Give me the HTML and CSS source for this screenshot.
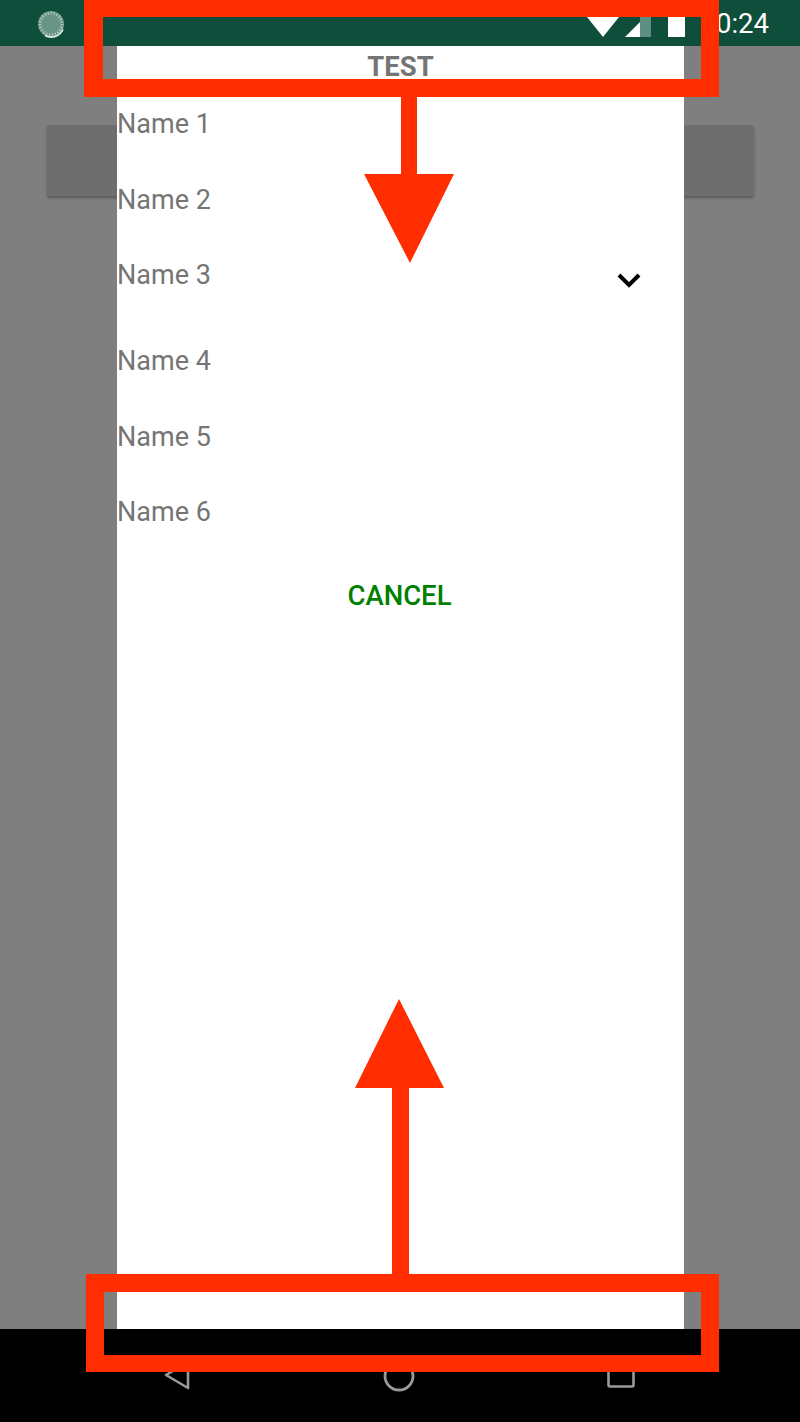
FILE: index.html
```html
<!DOCTYPE html>
<html lang="en">
<head>
  <meta charset="UTF-8">
  <meta name="viewport" content="width=device-width, initial-scale=1.0">
  <title>Dialog height</title>
  <link rel="stylesheet" href="styles.css">
</head>
<body>
  <div class="status-bar">
    <svg class="loader" width="28" height="28" viewBox="0 0 28 28">
      <circle cx="14" cy="14" r="13" fill="#6a9486"/>
      <circle cx="14" cy="14" r="11" fill="none" stroke="#a9c4ba" stroke-width="3" stroke-dasharray="1.4 1.6"/>
      <path d="M8 25.5a13 13 0 0 0 18-6" fill="none" stroke="#e8f0ed" stroke-width="1.6"/>
    </svg>
    <div class="status-icons">
      <svg width="32" height="20" viewBox="0 0 32 20"><path d="M0 0h32L16 20z" fill="#fff"/></svg>
      <svg width="26" height="20" viewBox="0 0 26 20">
        <path d="M0 20L15 5v15z" fill="#fff"/>
        <path d="M15 0h11v20H15z" fill="#5f8f80"/>
      </svg>
      <div class="battery"></div>
      <span class="clock">10:24</span>
    </div>
  </div>

  <div class="screen">
    <div class="page-card"></div>

    <div class="dialog">
      <div class="dialog-title">TEST</div>
      <div class="dialog-row">Name 1</div>
      <div class="dialog-row">Name 2</div>
      <div class="dialog-row dialog-row-open">
        <span>Name 3</span>
        <svg class="chevron" width="24" height="16" viewBox="0 0 24 16"><path d="M2 3l10 10L22 3" fill="none" stroke="#000" stroke-width="4"/></svg>
      </div>
      <div class="dialog-row">Name 4</div>
      <div class="dialog-row">Name 5</div>
      <div class="dialog-row">Name 6</div>
      <div class="dialog-cancel">CANCEL</div>
    </div>
  </div>

  <div class="nav-bar">
    <svg width="26" height="30" viewBox="0 0 26 30"><path d="M24 2v26L2 15z" fill="none" stroke="#9a9a9a" stroke-width="2.6" stroke-linejoin="round"/></svg>
    <svg width="32" height="32" viewBox="0 0 32 32"><circle cx="16" cy="16" r="14" fill="none" stroke="#9a9a9a" stroke-width="2.8"/></svg>
    <svg width="28" height="28" viewBox="0 0 28 28"><rect x="1.5" y="1.5" width="25" height="25" rx="1.5" fill="none" stroke="#9a9a9a" stroke-width="2.6"/></svg>
  </div>

  <!-- Red markup drawn on top of the screenshot -->
  <svg class="markup" width="800" height="1422" viewBox="0 0 800 1422">
    <path d="M84 -2H719V97H84z M103 17V79H701V17z" fill="#ff2d00" fill-rule="evenodd"/>
    <path d="M401 97h16v77h37l-44 89-46-89h37z" fill="#ff2d00"/>
    <path d="M86 1274H719V1372H86z M104 1292V1355H701V1292z" fill="#ff2d00" fill-rule="evenodd"/>
    <path d="M392 1274v-186h-37l44-89 45 89h-35v186z" fill="#ff2d00"/>
  </svg>
</body>
</html>
```

FILE: styles.css
```css
* {
  box-sizing: border-box;
}

body {
  margin: 0;
  width: 800px;
  height: 1422px;
  display: flex;
  flex-direction: column;
  overflow: hidden;
  font-family: Roboto, "Liberation Sans", sans-serif;
  background-color: #000;
}

.status-bar {
  height: 46px;
  flex-shrink: 0;
  display: flex;
  align-items: center;
  justify-content: space-between;
  padding: 0 31px 0 37px;
  background-color: #0e4e3a;
}

.loader {
  margin-top: 1px;
}

.status-icons {
  display: flex;
  align-items: flex-end;
  height: 20px;
  margin-top: 7px;
}

.status-icons svg {
  margin-right: 6px;
}

.status-icons svg + svg {
  margin-right: 17px;
}

.battery {
  width: 17px;
  height: 20px;
  background-color: #fff;
  margin-right: 16px;
}

.clock {
  color: #fff;
  font-size: 27.5px;
  line-height: 20px;
  margin-bottom: 3px;
}

.screen {
  position: relative;
  height: 1283px;
  flex-shrink: 0;
  padding: 79px 46px 0 47px;
  background-color: #7f7f7f;
}

.page-card {
  height: 71px;
  background-color: #6e6e6e;
  border-radius: 3px;
  box-shadow: 0 2px 3px rgba(0, 0, 0, 0.3);
}

.dialog {
  position: absolute;
  left: 117px;
  top: 0;
  width: 567px;
  height: 1283px;
  background-color: #fff;
  color: #757575;
}

.dialog-title {
  height: 40px;
  padding-top: 1px;
  text-align: center;
  font-size: 27.5px;
  font-weight: 700;
  line-height: 40px;
}

.dialog-row {
  height: 75.6px;
  padding-top: 1px;
  font-size: 27px;
  line-height: 75.6px;
}

.dialog-row-open {
  height: 86px;
  display: flex;
  justify-content: space-between;
  align-items: center;
  padding-right: 43px;
}

.dialog-row-open span {
  align-self: flex-start;
}

.chevron {
  display: block;
  margin-top: -2px;
}

.dialog-cancel {
  height: 90px;
  padding: 1px 2px 0 0;
  text-align: center;
  font-size: 27.5px;
  font-weight: 500;
  line-height: 90px;
  color: #008000;
}

.nav-bar {
  flex: 1;
  display: flex;
  align-items: flex-start;
  padding: 31px 165px 0 164px;
  justify-content: space-between;
  background-color: #000;
}

.markup {
  position: absolute;
  left: 0;
  top: 0;
}
```
